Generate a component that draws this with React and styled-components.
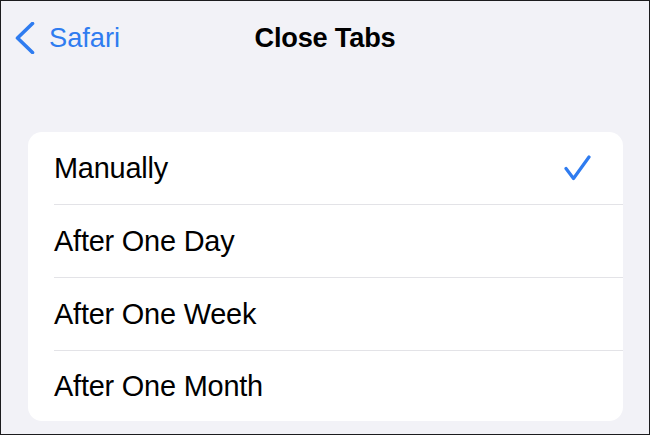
import React from 'react';
import styled, { createGlobalStyle } from 'styled-components';

const GlobalStyle = createGlobalStyle`
  html, body {
    margin: 0;
    padding: 0;
    background: #f2f2f7;
  }
  * {
    box-sizing: border-box;
  }
`;

const Screen = styled.div`
  width: 650px;
  height: 435px;
  border: 1px solid #1c1c1e;
  background-color: #f2f2f7;
  font-family: "Liberation Sans", Arial, sans-serif;
  overflow: hidden;
`;

const NavBar = styled.div`
  display: grid;
  grid-template-columns: 1fr auto 1fr;
  align-items: center;
  height: 74px;
  padding: 0 14px;
`;

const BackButton = styled.div`
  display: flex;
  align-items: center;
  gap: 14px;
  color: #2f7cf0;
  font-size: 27.2px;
  cursor: pointer;
`;

const Title = styled.div`
  font-size: 27.2px;
  font-weight: 700;
  color: #000;
  letter-spacing: -0.2px;
`;

const Content = styled.div`
  padding: 57px 26px 0 27px;
`;

const Card = styled.div`
  background: #fff;
  border-radius: 14px;
  overflow: hidden;
`;

const Row = styled.div`
  display: flex;
  padding-left: 26px;
  cursor: pointer;
`;

const RowInner = styled.div`
  flex: 1;
  display: flex;
  align-items: center;
  justify-content: space-between;
  height: ${(p) => (p.$last ? '70px' : '73px')};
  padding-right: 32px;
  border-bottom: ${(p) => (p.$last ? 'none' : '1px solid #e3e3e7')};
  font-size: 28.9px;
  color: #000;
  letter-spacing: -0.2px;
`;

const Chevron = () => (
  <svg width="20" height="32" viewBox="0 0 20 32" fill="none">
    <polyline
      points="17.5,1.5 2.5,16 17.5,30.5"
      stroke="#2f7cf0"
      strokeWidth="3.6"
      strokeLinecap="round"
      strokeLinejoin="round"
    />
  </svg>
);

const Check = () => (
  <svg width="27" height="27" viewBox="0 0 27 27" fill="none">
    <polyline
      points="2,13.5 9.5,23.5 25,2"
      stroke="#2f7cf0"
      strokeWidth="3.2"
      strokeLinecap="round"
      strokeLinejoin="round"
    />
  </svg>
);

const options = ['Manually', 'After One Day', 'After One Week', 'After One Month'];

export default function App() {
  const selected = 'Manually';

  return (
    <Screen>
      <GlobalStyle />
      <NavBar>
        <BackButton>
          <Chevron />
          <span>Safari</span>
        </BackButton>
        <Title>Close Tabs</Title>
        <div />
      </NavBar>
      <Content>
        <Card>
          {options.map((opt, i) => (
            <Row key={opt}>
              <RowInner $last={i === options.length - 1}>
                <span>{opt}</span>
                {opt === selected && <Check />}
              </RowInner>
            </Row>
          ))}
        </Card>
      </Content>
    </Screen>
  );
}
